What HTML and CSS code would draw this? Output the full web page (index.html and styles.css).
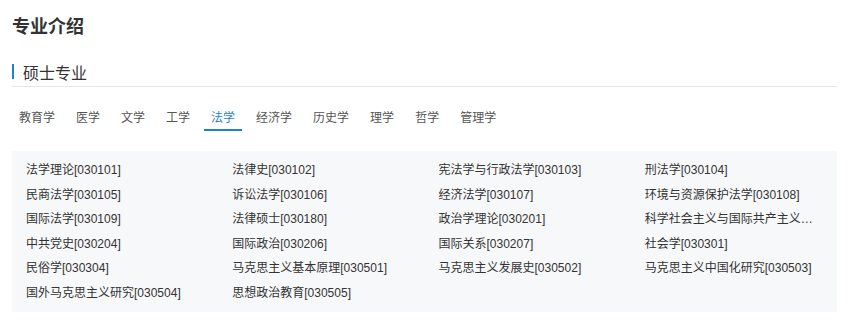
FILE: index.html
```html
<!DOCTYPE html>
<html lang="zh-CN">
<head>
    <meta charset="UTF-8">
    <title>专业介绍</title>
    <link rel="stylesheet" href="styles.css">
</head>
<body>
    <div class="major_wrap">
        <h2 class="title">专业介绍</h2>
        <div class="sub_hd">硕士专业</div>
        <ul class="tabs">
            <li>教育学</li>
            <li>医学</li>
            <li>文学</li>
            <li>工学</li>
            <li class="on">法学</li>
            <li>经济学</li>
            <li>历史学</li>
            <li>理学</li>
            <li>哲学</li>
            <li>管理学</li>
        </ul>
        <ul class="major_list">
            <li>法学理论[030101]</li>
            <li>法律史[030102]</li>
            <li>宪法学与行政法学[030103]</li>
            <li>刑法学[030104]</li>
            <li>民商法学[030105]</li>
            <li>诉讼法学[030106]</li>
            <li>经济法学[030107]</li>
            <li>环境与资源保护法学[030108]</li>
            <li>国际法学[030109]</li>
            <li>法律硕士[030180]</li>
            <li>政治学理论[030201]</li>
            <li>科学社会主义与国际共产主义运动[030203]</li>
            <li>中共党史[030204]</li>
            <li>国际政治[030206]</li>
            <li>国际关系[030207]</li>
            <li>社会学[030301]</li>
            <li>民俗学[030304]</li>
            <li>马克思主义基本原理[030501]</li>
            <li>马克思主义发展史[030502]</li>
            <li>马克思主义中国化研究[030503]</li>
            <li>国外马克思主义研究[030504]</li>
            <li>思想政治教育[030505]</li>
        </ul>
    </div>
</body>
</html>
```

FILE: styles.css
```css
body { margin:0; background:#fff; font-family:"Liberation Sans", "Noto Sans CJK SC", sans-serif; color:#333; }
ul { margin:0; padding:0; list-style:none; }
.major_wrap { width:825px; padding:14px 0 0 12px; }
.title { margin:0; font-size:18px; line-height:26px; font-weight:bold; color:#333; }
.sub_hd { display:flex; align-items:center; margin-top:17px; height:29px; font-size:16px; color:#333; border-bottom:1px solid #e6e6e6; }
.sub_hd::before { content:""; width:2px; height:15px; margin-right:9px; background:#1f7fd6; }
.tabs { display:flex; gap:7px; margin-top:21px; }
.tabs li { padding:0 7px; font-size:12px; line-height:21px; color:#555; border-bottom:2px solid transparent; cursor:pointer; }
.tabs li.on { color:#1f7fd6; border-bottom-color:#1f7fd6; }
.major_list { display:grid; grid-template-columns:repeat(4, 1fr); margin-top:20px; padding:7px 0; background:#f7f8fa; }
.major_list li { padding:0 14px; font-size:12px; line-height:24.5px; color:#333; white-space:nowrap; overflow:hidden; text-overflow:ellipsis; }
```
